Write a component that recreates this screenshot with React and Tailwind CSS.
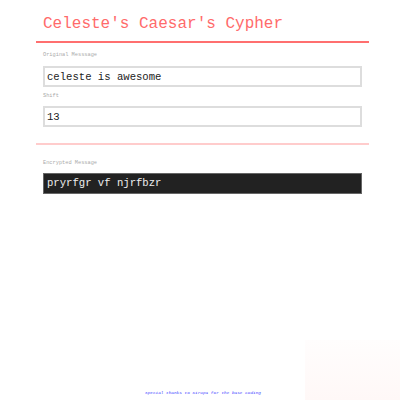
import { useState } from 'react';

const caesar = (text, shift) =>
  text.replace(/[a-z]/gi, (ch) => {
    const base = ch <= 'Z' ? 65 : 97;
    return String.fromCharCode(((ch.charCodeAt(0) - base + shift) % 26 + 26) % 26 + base);
  });

const Label = ({ children, className = '' }) => (
  <p className={`text-[5.3px] leading-[8px] text-[#aaaaaa] ${className}`}>{children}</p>
);

export default function App() {
  const [message, setMessage] = useState('celeste is awesome');
  const [shift, setShift] = useState('13');
  const encrypted = caesar(message, parseInt(shift, 10) || 0);

  return (
    <div className="relative flex min-h-[400px] flex-col bg-white font-['Liberation_Mono',monospace]">
      <div className="pointer-events-none absolute bottom-0 right-0 h-[60px] w-[95px] bg-gradient-to-b from-[#fffdfd] to-[#fff8f7]" />

      <div className="relative ml-[36px] w-[333px]">
        <h1 className="px-[7px] pt-[14px] text-[16px] leading-[20px] text-[#ff6b6b]">
          Celeste's Caesar's Cypher
        </h1>
        <div className="mt-[7px] h-[2px] bg-[#ff6f6f]" />

        <section className="px-[7px]">
          <Label className="mt-[8px]">Original Messsage</Label>
          <input
            value={message}
            onChange={(e) => setMessage(e.target.value)}
            className="mt-[7px] block h-[21px] w-[319px] border-2 border-[#dddddd] bg-white px-[2px] text-[10.6px] text-[#222222] outline-none"
          />
          <Label className="mt-[5px]">Shift</Label>
          <input
            value={shift}
            onChange={(e) => setShift(e.target.value)}
            className="mt-[6px] block h-[21px] w-[319px] border-2 border-[#dddddd] bg-white px-[2px] text-[10.6px] text-[#222222] outline-none"
          />
        </section>

        <div className="mt-[16px] h-[2px] bg-[#ffcccc]" />

        <section className="px-[7px]">
          <Label className="mt-[14px]">Encrypted Message</Label>
          <div className="mt-[6px] flex h-[21px] w-[319px] items-center border border-[#666666] bg-[#222222] px-[3px] text-[10.6px] text-[#eeeeee]">
            {encrypted}
          </div>
        </section>
      </div>

      <footer className="relative mt-auto pb-[4px] pl-[145px] text-[4.4px] italic leading-[6px] text-[#3b3bff]">
        Special thanks to Kirupa for the base Coding
      </footer>
    </div>
  );
}
